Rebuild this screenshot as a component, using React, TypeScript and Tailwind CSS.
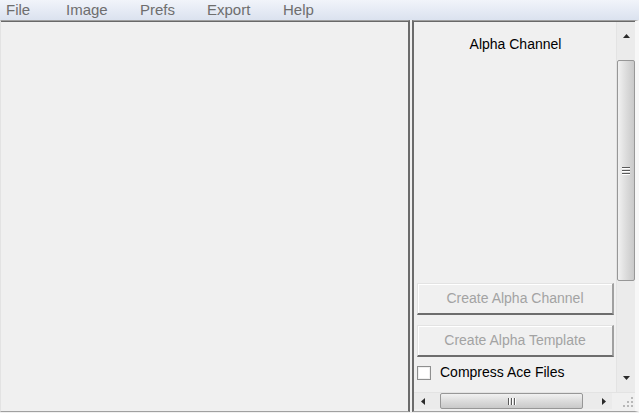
import React from "react";

function Arrow({ dir }: { dir: "up" | "down" | "left" | "right" }) {
  const pts: Record<string, string> = {
    up: "0,4 7,4 3.5,0",
    down: "0,0 7,0 3.5,4",
    left: "4,0 4,7 0,3.5",
    right: "0,0 0,7 4,3.5",
  };
  const vertical = dir === "up" || dir === "down";
  return (
    <svg width={vertical ? 7 : 4} height={vertical ? 4 : 7} viewBox={vertical ? "0 0 7 4" : "0 0 4 7"}>
      <polygon points={pts[dir]} fill="#2a2a2a" />
    </svg>
  );
}

function Btn({ label }: { label: string }) {
  return (
    <div className="h-[32px] w-[197px] flex items-center justify-center bg-[#f0f0f0] border-t border-l border-[#e3e3e3] border-b-2 border-r-2 border-b-[#6d6d6d] border-r-[#a0a0a0] text-[#a3a3a3] text-[14px] shadow-[inset_1px_1px_0_#ffffff]">
      {label}
    </div>
  );
}

export default function App() {
  return (
    <div
      className="w-[639px] h-[413px] bg-[#f0f0f0] flex flex-col overflow-hidden"
      style={{ fontFamily: '"Liberation Sans", Arial, sans-serif' }}
    >
      {/* menu bar */}
      <div className="h-[20px] bg-gradient-to-b from-[#f1f4fa] to-[#dbe2ef] flex items-center text-[15px] text-[#6e6e6e] pl-[6px] shrink-0">
        <span className="w-[60px]">File</span>
        <span className="w-[74px]">Image</span>
        <span className="w-[67px]">Prefs</span>
        <span className="w-[76px]">Export</span>
        <span>Help</span>
      </div>
      {/* main */}
      <div className="flex-1 flex flex-row gap-[2px] pb-[1px]">
        {/* left pane */}
        <div className="w-[410px] h-full border-t border-l border-t-[#a0a0a0] border-l-[#e3e3e3] border-r-2 border-r-[#6b6b6b] border-b border-b-[#a0a0a0] shadow-[inset_0_1px_0_#696969] bg-[#f0f0f0]" />
        {/* right pane */}
        <div className="flex-1 h-full border-t border-t-[#a0a0a0] border-l-2 border-l-[#6b6b6b] border-b border-b-[#a0a0a0] border-r-[4px] border-r-[#f7f7f7] shadow-[inset_0_1px_0_#696969] pt-[1px] pb-[2px] flex flex-col">
          <div className="flex-1 flex flex-row min-h-0">
            {/* content */}
            <div className="flex-1 flex flex-col items-center pl-[3px] pt-[13px] overflow-hidden">
              <div className="text-[14px] text-black w-full text-center pr-[2px] leading-[18px]">Alpha Channel</div>
              <div className="flex-1" />
              <div className="w-full flex flex-col gap-[10px]">
                <Btn label="Create Alpha Channel" />
                <Btn label="Create Alpha Template" />
              </div>
              <div className="w-full flex items-center gap-[9px] mt-[8px] mb-[12px] h-[15px]">
                <div className="w-[14px] h-[14px] bg-white border border-[#8e8f8f] shadow-[inset_0_0_0_1px_#f0f0f0]" />
                <span className="text-[14px] text-black">Compress Ace Files</span>
              </div>
            </div>
            {/* vertical scrollbar */}
            <div className="w-[19px] bg-[#ebebeb] border-l border-[#e3e3e3] flex flex-col">
              <div className="h-[17px] flex items-center justify-center mt-[5px]">
                <Arrow dir="up" />
              </div>
              <div className="h-[16px]" />
              <div className="h-[221px] rounded-[2px] border border-[#979797] bg-gradient-to-r from-[#f1f1f1] via-[#dcdcdc] to-[#c9c9c9] flex items-center justify-center">
                <div className="flex flex-col gap-[1px]">
                  <div className="w-[8px] h-[2px] bg-[#5a5a5a] border-b border-[#fff]" />
                  <div className="w-[8px] h-[2px] bg-[#5a5a5a] border-b border-[#fff]" />
                  <div className="w-[8px] h-[2px] bg-[#5a5a5a] border-b border-[#fff]" />
                </div>
              </div>
              <div className="flex-1" />
              <div className="h-[17px] flex items-center justify-center mb-[6px]">
                <Arrow dir="down" />
              </div>
            </div>
          </div>
          {/* horizontal scrollbar */}
          <div className="h-[17px] flex flex-row bg-[#ebebeb] border-t border-[#e3e3e3]">
            <div className="w-[17px] flex items-center justify-center">
              <Arrow dir="left" />
            </div>
            <div className="w-[9px]" />
            <div className="w-[143px] h-[16px] rounded-[2px] border border-[#979797] bg-gradient-to-b from-[#f1f1f1] via-[#dcdcdc] to-[#c9c9c9] flex items-center justify-center gap-[1px]">
              <div className="w-[2px] h-[7px] bg-[#5a5a5a] border-r border-white" />
              <div className="w-[2px] h-[7px] bg-[#5a5a5a] border-r border-white" />
              <div className="w-[2px] h-[7px] bg-[#5a5a5a] border-r border-white" />
            </div>
            <div className="flex-1" />
            <div className="w-[17px] flex items-center justify-center">
              <Arrow dir="right" />
            </div>
            <div className="w-[23px] bg-[#f0f0f0] flex items-end justify-end p-[2px]">
              <svg width="10" height="10" viewBox="0 0 10 10">
                <rect x="8" y="0" width="2" height="2" fill="#b8b8b8" />
                <rect x="4" y="4" width="2" height="2" fill="#b8b8b8" />
                <rect x="8" y="4" width="2" height="2" fill="#b8b8b8" />
                <rect x="0" y="8" width="2" height="2" fill="#b8b8b8" />
                <rect x="4" y="8" width="2" height="2" fill="#b8b8b8" />
                <rect x="8" y="8" width="2" height="2" fill="#b8b8b8" />
              </svg>
            </div>
          </div>
        </div>
      </div>
    </div>
  );
}
